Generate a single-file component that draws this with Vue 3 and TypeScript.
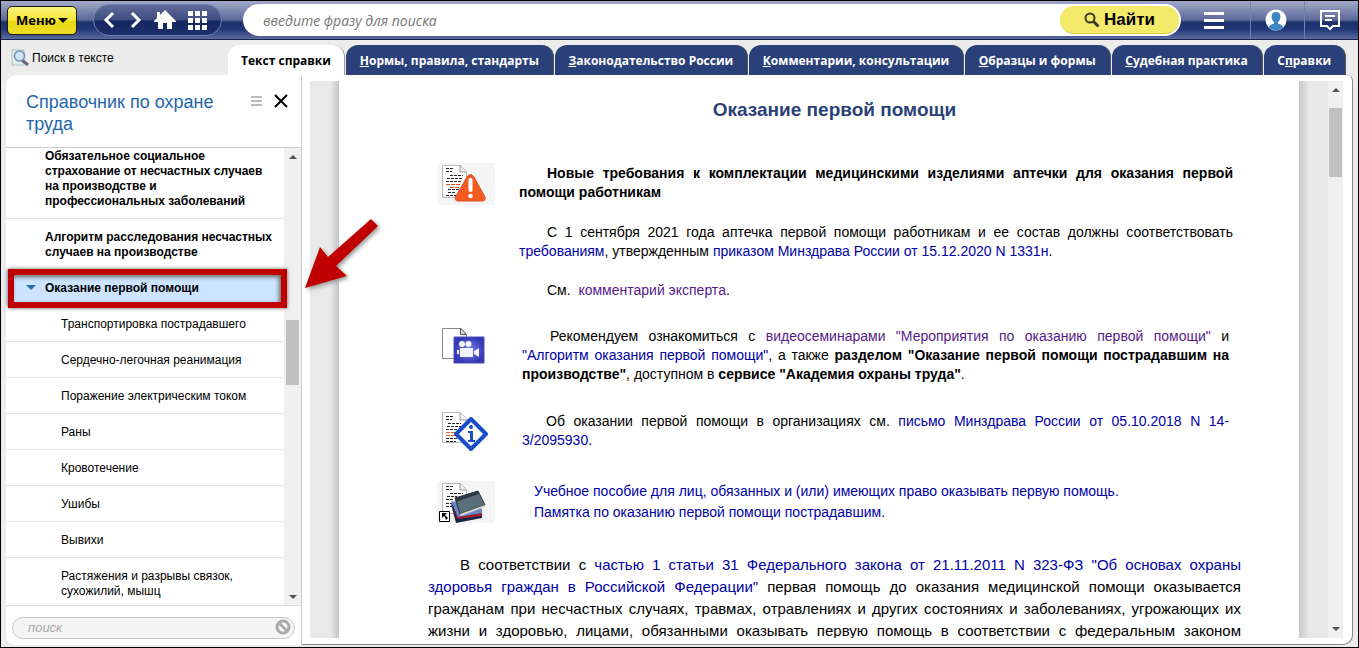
<script setup lang="ts">
interface Tab { before: string; key: string; after: string }
interface NavItem { text: string; level: number; active?: boolean }

const tabs: Tab[] = [
  { before: '', key: 'Н', after: 'ормы, правила, стандарты' },
  { before: '', key: 'З', after: 'аконодательство России' },
  { before: '', key: 'К', after: 'омментарии, консультации' },
  { before: '', key: 'О', after: 'бразцы и формы' },
  { before: '', key: 'С', after: 'удебная практика' },
  { before: 'С', key: 'п', after: 'равки' },
]

const items: NavItem[] = [
  { text: 'Обязательное социальное страхование от несчастных случаев на производстве и профессиональных заболеваний', level: 1 },
  { text: 'Алгоритм расследования несчастных случаев на производстве', level: 1 },
  { text: 'Оказание первой помощи', level: 1, active: true },
  { text: 'Транспортировка пострадавшего', level: 2 },
  { text: 'Сердечно-легочная реанимация', level: 2 },
  { text: 'Поражение электрическим током', level: 2 },
  { text: 'Раны', level: 2 },
  { text: 'Кровотечение', level: 2 },
  { text: 'Ушибы', level: 2 },
  { text: 'Вывихи', level: 2 },
  { text: 'Растяжения и разрывы связок, сухожилий, мышц', level: 2 },
]
</script>

<template>
  <div class="window">
    <header class="topbar">
      <button class="menu-btn" type="button">Меню<span class="caret"></span></button>
      <nav class="pill" aria-label="Навигация">
        <button type="button" aria-label="Назад">
          <svg width="14" height="18" viewBox="0 0 14 18"><path d="M11 2 4 9l7 7" fill="none" stroke="#fff" stroke-width="3" /></svg>
        </button>
        <button type="button" aria-label="Вперёд">
          <svg width="14" height="18" viewBox="0 0 14 18"><path d="m4 2 7 7-7 7" fill="none" stroke="#fff" stroke-width="3" /></svg>
        </button>
        <button type="button" aria-label="Домой">
          <svg width="22" height="20" viewBox="0 0 22 20"><path d="M11 0 6 5V2H3v6L0 11v1h4v7h5v-6h4v6h5v-7h4v-1z" fill="#fff" /></svg>
        </button>
        <button type="button" aria-label="Сервисы">
          <svg width="20" height="19" viewBox="0 0 20 19" fill="#fff"><path d="M0 0h5v5H0zM7 0h5v5H7zM14 0h5v5h-5zM0 7h5v5H0zM7 7h5v5H7zM14 7h5v5h-5zM0 14h5v5H0zM7 14h5v5H7zM14 14h5v5h-5z" /></svg>
        </button>
      </nav>
      <form class="search" @submit.prevent>
        <input type="text" placeholder="введите фразу для поиска" aria-label="введите фразу для поиска">
        <button type="submit">
          <svg width="16" height="16" viewBox="0 0 16 16" fill="none" stroke="#3a3a20"><circle cx="6" cy="6" r="4.500" stroke-width="2" /><path d="m9.500 9.500 5 5" stroke-width="3" /></svg>
          Найти
        </button>
      </form>
      <button class="tool" type="button" aria-label="Список">
        <svg width="20" height="18" viewBox="0 0 20 18" fill="#fff"><path d="M0 1h20v3H0zM0 8h20v3H0zM0 15h20v3H0z" /></svg>
      </button>
      <button class="tool" type="button" aria-label="Профиль">
        <svg width="22" height="22" viewBox="0 0 22 22"><circle cx="11" cy="11" r="10.500" fill="#fff" /><path d="M11 3c-3 0-4.500 2-4.500 4.500 0 2.500 1 4.500 2.500 5.500v1.500c-2 .6-4 1.500-5.500 3.500 2 2 4.500 3.500 7.500 3.500s5.500-1.500 7.500-3.500c-1.500-2-3.500-2.900-5.500-3.500V13c1.500-1 2.500-3 2.500-5.500C15.500 5 14 3 11 3z" fill="#3f86c4" /></svg>
      </button>
      <button class="tool" type="button" aria-label="Сообщения">
        <svg width="22" height="22" viewBox="0 0 22 22" fill="none" stroke="#fff" stroke-width="2"><path d="M2 2h18v15h-6l-3 3-3-3H2zM6 7h10M6 11h7" /></svg>
      </button>
    </header>

    <div class="tabrow">
      <a class="find" href="#">
        <svg width="18" height="18" viewBox="0 0 18 18"><path d="M1 1h12v15H1z" fill="#dfeee8" stroke="#a9c4c8" /><path d="m11 11 6 5" stroke="#667" stroke-width="3" /><circle cx="8.500" cy="7" r="5" fill="#cfe6fa" stroke="#7892b4" stroke-width="1.500" /></svg>
        Поиск в тексте
      </a>
      <nav class="tabs">
        <a class="tab current" href="#">Текст справки</a>
        <a v-for="t in tabs" :key="t.after" class="tab" href="#">{{ t.before }}<u>{{ t.key }}</u>{{ t.after }}</a>
      </nav>
    </div>

    <div class="body">
      <aside class="side">
        <div class="side-head">
          <h2>Справочник по охране труда</h2>
          <button type="button" aria-label="Меню раздела">
            <svg width="11" height="11" viewBox="0 0 11 11" fill="#bbb"><path d="M0 0h11v2H0zM0 4h11v2H0zM0 8h11v2H0z" /></svg>
          </button>
          <button type="button" aria-label="Закрыть">
            <svg width="14" height="14" viewBox="0 0 14 14"><path d="m1 1 12 12M13 1 1 13" stroke="#000" stroke-width="2" /></svg>
          </button>
        </div>
        <div class="tree">
          <ul>
            <li v-for="i in items" :key="i.text" :class="['lvl' + i.level, { active: i.active }]">
              <a href="#">{{ i.text }}</a>
            </li>
          </ul>
          <div class="scrollbar side-bar"><i class="up"></i><b></b><i class="down"></i></div>
        </div>
        <form class="side-search" @submit.prevent>
          <input type="text" placeholder="поиск" aria-label="поиск">
          <svg width="16" height="16" viewBox="0 0 16 16" fill="none" stroke="#aaa"><circle cx="8" cy="8" r="6" fill="#f8f8f8" stroke-width="3" /><path d="m4 4 8 8" stroke-width="3" /></svg>
        </form>
      </aside>

      <main class="main">
        <div class="gutter left"></div>
        <article class="doc">
          <h1>Оказание первой помощи</h1>
          <section class="note first">
            <svg class="tinted" width="58" height="42" viewBox="0 0 58 42">
              <path d="M5.500 2.500h18l6 6v26h-24z" fill="#fff" stroke="#bbb" /><path d="M23 2v7h6" fill="#eee" stroke="#999" />
              <path d="M9 5.500h8M9 8.500h6M13 12.500h13M10 15.500h15M9 18.500h15M11 26.500h11M11 29.500h7M9 32.500h10" stroke="#222" stroke-dasharray="3 1" />
              <path d="M9 21.500h14M13 24.500h9" stroke="#f04a20" stroke-dasharray="4 1" />
              <path d="M30 14 19 33q-2 5 2 5h24q4 0 3-4L37 14q-3.500-5-7 0z" fill="#f35b22" stroke="#d9532a" />
              <path d="M33.500 17v10" stroke="#fff" stroke-width="4" stroke-linecap="round" /><circle cx="33.500" cy="33" r="2.300" fill="#fff" />
            </svg>
            <div>
              <p class="strong">Новые требования к комплектации медицинскими изделиями аптечки для оказания первой помощи работникам</p>
              <p>С 1 сентября 2021 года аптечка первой помощи работникам и ее состав должны соответствовать <a href="#">требованиям</a>, утвержденным <a href="#">приказом Минздрава России от 15.12.2020 N 1331н</a>.</p>
              <p>См.&nbsp; <a class="seen" href="#">комментарий эксперта</a>.</p>
            </div>
          </section>
          <section class="note video">
            <svg width="58" height="42" viewBox="0 -3 58 42">
              <defs><radialGradient id="screen"><stop offset="0" stop-color="#7f86e8" /><stop offset="1" stop-color="#3338b4" /></radialGradient></defs>
              <path d="M5.500 0.500h18l6 6v24h-24z" fill="#fff" stroke="#888" /><path d="M23.500 0v6.500h6z" fill="#ddd" stroke="#555" />
              <path d="M17 9h30v26H17z" fill="url(#screen)" stroke="#4a50b8" />
              <circle cx="25" cy="16" r="3" fill="#f2f4ff" /><circle cx="31.500" cy="16" r="3" fill="#f2f4ff" /><path d="M23 20h13v9H23zM20 22h2v4h-2zM37 23l5-3v9l-5-3z" fill="#f2f4ff" />
            </svg>
            <p>Рекомендуем ознакомиться с <a class="seen" href="#">видеосеминарами "Мероприятия по оказанию первой помощи"</a> и <a href="#">"Алгоритм оказания первой помощи"</a>, а также <b>разделом "Оказание первой помощи пострадавшим на производстве"</b>, доступном в <b>сервисе "Академия охраны труда"</b>.</p>
          </section>
          <section class="note info">
            <svg width="58" height="42" viewBox="0 -1 58 42">
              <path d="M5.500 1.500h18l6 6v24h-24z" fill="#fff" stroke="#bbb" /><path d="M23 2v7h6" fill="#eee" stroke="#999" />
              <path d="M9 5.500h8M9 8.500h6M11 12.500h13M10 15.500h15M9 18.500h13M9 27.500h12M9 30.500h10" stroke="#222" stroke-dasharray="3 1" />
              <path d="M9 21.500h10M9 24.500h9" stroke="#f06020" stroke-dasharray="4 1" />
              <path d="m34 8 15 15-15 15-15-15z" fill="#fff" stroke="#184fc8" stroke-width="4" stroke-linejoin="round" />
              <circle cx="34" cy="16" r="2" fill="#184fc8" /><path d="M31 20h5v9h2v2h-7v-2h2v-7h-2z" fill="#184fc8" />
            </svg>
            <p>Об оказании первой помощи в организациях см. <a href="#">письмо Минздрава России от 05.10.2018 N 14-3/2095930</a>.</p>
          </section>
          <section class="note books">
            <svg class="tinted" width="58" height="42" viewBox="0 0 58 42">
              <path d="M5.500 2.500h18l6 6v24h-24z" fill="#fff" stroke="#bbb" /><path d="M23 2v7h6" fill="#eee" stroke="#999" />
              <path d="M9 5.500h8M9 8.500h6M13 12.500h13M10 15.500h10M9 18.500h8M9 22.500h6M9 25.500h6" stroke="#222" stroke-dasharray="3 1" />
              <path d="m14 23 31 11v3l-26 5z" fill="#102848" /><path d="m15 22 30 9v4l-25 3z" fill="#a01c2c" /><path d="m14 20 25 4 6 4v4l-24 4z" fill="#6585cc" />
              <path d="m18 17 23-7 7 14-25 9z" fill="#5a7078" stroke="#28333b" /><path d="m18 17 23-7 1 3-23 8z" fill="#303848" /><path d="m23 33 25-9v2l-24 9z" fill="#d8d8c8" />
              <path d="M2.500 30.500h10v10h-10z" fill="#fff" stroke="#000" /><path d="M5 32h5l-2 2 3 3-2 2-1-3-1-1-2 2z" fill="#000" />
            </svg>
            <p><a href="#">Учебное пособие для лиц, обязанных и (или) имеющих право оказывать первую помощь.</a><br><a href="#">Памятка по оказанию первой помощи пострадавшим.</a></p>
          </section>
          <p class="law">
            <span class="lead">В соответствии с <a href="#">частью 1 статьи 31 Федерального закона от 21.11.2011 N 323-ФЗ "Об основах охраны</a></span>
            <span><a href="#">здоровья граждан в Российской Федерации"</a> первая помощь до оказания медицинской помощи оказывается</span>
            <span>гражданам при несчастных случаях, травмах, отравлениях и других состояниях и заболеваниях, угрожающих их</span>
            <span>жизни и здоровью, лицами, обязанными оказывать первую помощь в соответствии с федеральным законом</span>
          </p>
        </article>
        <div class="gutter right"></div>
        <div class="scrollbar main-bar"><i class="up"></i><b></b><i class="down"></i></div>
      </main>
    </div>

    <svg class="arrow" width="84" height="84" viewBox="0 0 84 84"><path d="M5 74 20 33l8 10L71 5l7 7-42 40 11 10z" fill="#c00000" /></svg>
  </div>
</template>

<style>
body { margin: 0; }
</style>

<style scoped>
* { box-sizing: border-box; }
.window { position: relative; display: flex; flex-direction: column; height: 100vh; overflow: hidden; border: 1px solid #000; background: #ececec; font-family: "Liberation Sans", Arial, sans-serif; color: #000; }
button { padding: 0; border: 0; background: none; font-family: inherit; display: flex; align-items: center; justify-content: center; }
a { color: #0000a8; text-decoration: none; }
h1, h2, p, ul { margin: 0; padding: 0; }
svg { display: block; flex: none; }

.topbar { flex: none; height: 39px; display: flex; align-items: center; padding-left: 6px; border-bottom: 1px solid #14234f; background: linear-gradient(#a2a9c8 0, #8089b2 25%, #5a6798 50%, #1b2f6a 56%, #223878 75%, #5c6b9e 100%); }
.menu-btn { width: 70px; height: 29px; border: 1px solid #1c1c10; border-radius: 5px; background: linear-gradient(#fdf480, #f5e636 50%, #e9d810 52%, #eedd28); font-family: "Open Sans", sans-serif; font-weight: 700; font-size: 13px; }
.caret { margin-left: 2px; border: 5px solid transparent; border-top-color: #000; border-bottom: 0; }
.pill { margin-left: 16px; width: 129px; height: 32px; display: flex; align-items: center; justify-content: space-between; padding: 0 13px 0 8px; border: 1px solid #7180b0; border-radius: 16px; background: linear-gradient(#5f6a98, #3f4e82 48%, #14275f 54%, #1c2f69); }
.search { flex: 1; margin-left: 21px; height: 32px; display: flex; align-items: center; padding: 2px; background: #fff; border-radius: 16px; }
.search input { flex: 1; min-width: 0; border: 0; outline: 0; background: none; padding: 0 0 0 18px; font: italic 14px "Open Sans", sans-serif; }
.search input::placeholder { color: #777; opacity: 1; }
.search button { width: 119px; height: 28px; gap: 4px; border-radius: 14px; background: #f3ea6c; border-bottom: 1px solid #d8cc50; font: 700 17px/20px "Liberation Sans", sans-serif; }
.tool { width: 54px; height: 38px; padding-right: 4px; border-left: 1px solid #7480aa; }
.search + .tool { width: 69px; border-left: 0; }

.tabrow { flex: none; height: 35px; display: flex; align-items: flex-end; padding-right: 12px; }
.find { width: 227px; height: 35px; display: flex; align-items: center; gap: 3px; padding-left: 10px; color: #000; font-size: 12px; }
.tabs { flex: 1; display: flex; gap: 1px; }
.tab { flex: 1 1 auto; height: 30px; line-height: 32px; text-align: center; border-radius: 12px 12px 0 0; background: #2a4078; border-right: 1px solid #555; color: #fff; font-family: "Open Sans", sans-serif; font-size: 12px; font-weight: 700; white-space: nowrap; }
.tab.current { flex: 0 0 117px; background: #fff; color: #000; border-color: #999; }

.body { flex: 1; min-height: 0; display: flex; padding: 0 5px 2px; }
.side { flex: none; width: 296px; display: flex; flex-direction: column; border-right: 1px solid #ccc; border-radius: 10px 0 0 10px; background: #fff; }
.side-head { height: 73px; flex: none; display: flex; gap: 12px; align-items: flex-start; padding: 16px 13px 0 20px; border-bottom: 1px solid #ccc; }
.side-head h2 { flex: 1; color: #2266aa; font-size: 18px; line-height: 22px; font-weight: 400; }
.side-head button { height: 20px; }
.tree { flex: 1; min-height: 0; display: flex; }
.tree ul { flex: 1; list-style: none; }
.tree li { border-bottom: 1px solid #e4e4e4; line-height: 15px; font-size: 12px; }
.tree li a { display: block; color: #000; padding: 11px 6px 9px 39px; }
.lvl1 { font-weight: 700; }
.tree li:first-child a { padding-top: 1px; }
.lvl2 a { padding-left: 55px !important; }
.tree li.active { position: relative; background: #cce4ff; }
.tree li.active::before { content: ""; position: absolute; left: 20px; top: 15px; border: 5px solid transparent; border-top-color: #2a6fb5; border-bottom: 0; }
.tree li.active::after { content: ""; position: absolute; inset: -1px -3px -3px 2px; border: 6px solid #c00000; box-shadow: 0 0 4px #666, inset -2px 2px 4px #666; }
.scrollbar { flex: none; display: flex; flex-direction: column; align-items: center; background: #f0f0f0; }
.scrollbar b { width: 13px; background: #c1c1c1; }
.scrollbar i { border: 4px solid transparent; }
.up { border-top: 0 !important; border-bottom-color: #505050 !important; margin-top: 7px; }
.down { border-bottom: 0 !important; border-top-color: #505050 !important; margin: auto 0 7px; }
.side-bar { width: 17px; }
.side-bar b { height: 65px; margin-top: 161px; }
.side-search { flex: none; height: 40px; display: flex; align-items: center; margin-top: -1px; padding: 4px 6px 0; border-top: 1px solid #ddd; background: #fff; position: relative; border-radius: 0 0 0 10px; }
.side-search input { width: 100%; height: 22px; border: 1px solid #c8c8c8; border-radius: 11px; background: #f4f4f4; padding: 0 28px 0 15px; font: italic 13px "Liberation Sans", sans-serif; }
.side-search input::placeholder { color: #aaa; opacity: 1; }
.side-search svg { position: absolute; right: 10px; top: 13px; }

.main { flex: 1; min-width: 0; display: flex; padding: 6px 9px 6px 8px; background: #fff; border: solid #888; border-width: 0 1px 1px 0; border-radius: 0 6px 10px 0; }
.gutter { flex: none; width: 29px; }
.left { background: linear-gradient(90deg, #e9e9e9 70%, #c4c4c4); }
.right { background: linear-gradient(90deg, #c8c8c8, #e8e8e8 35%); }
.main-bar { width: 15px; }
.main-bar b { height: 69px; margin-top: 16px; }
.doc { flex: 1; min-width: 0; overflow: hidden; padding: 0 58px 0 89px; }
.doc h1 { margin-top: 18px; text-align: center; color: #2a4078; font-size: 19px; line-height: 22px; font-weight: 700; }
.note { display: flex; align-items: flex-start; gap: 24px; padding: 0 8px 0 9px; font-size: 14px; line-height: 19px; }
.note > div, .note > p { flex: 1; }
.note p { padding-top: 1px; text-align: justify; text-indent: 28px; }
.note p + p { margin-top: 19px; }
.first { margin-top: 42px; }
.first .strong { margin-bottom: 20px; font-weight: 700; }
.tinted { background: #f5f5f5; }
.seen { color: #551a8b; }
.video, .info { padding-right: 12px; gap: 27px; }
.video { margin-top: 25px; }
.note.video p, .note.info p { padding-top: 2px; }
.info { margin-top: 26px; }
.note.info p { text-indent: 24px; }
.note.books { margin-top: 29px; gap: 39px; line-height: 21px; }
.note.books p { padding-top: 0; text-indent: 0; }
.law { margin-top: 31px; font-size: 15px; line-height: 22px; }
.law span { display: block; white-space: nowrap; text-align: justify; text-align-last: justify; }
.law .lead { padding-left: 32px; }
.arrow { position: absolute; left: 299px; top: 213px; filter: drop-shadow(2px 2px 2px #999); }
</style>
